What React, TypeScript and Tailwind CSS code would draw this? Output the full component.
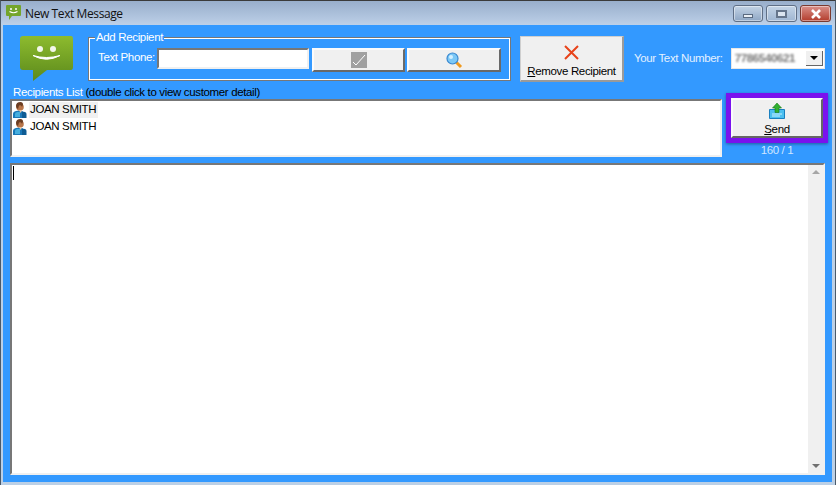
import React from "react";

const font = "font-['Liberation_Sans',sans-serif]";
const txt = "text-[11.5px] tracking-[-0.35px]";

function Person() {
  return (
    <svg width="14" height="16" viewBox="0 0 14 16" className="shrink-0">
      <path d="M0 16V12Q0 9.500 3 9L6 8.500L10 9.500V16Z" fill="#1a78b8" />
      <path d="M2 15V12Q2 10.500 4 10L7 10V15Z" fill="#45aede" />
      <path d="M9 9.500L12 10Q13.500 10.500 13.500 12V16H9Z" fill="#0e5c94" />
      <circle cx="7" cy="5" r="3.800" fill="#b9764a" />
      <path d="M3 4Q3 0 7.500 0Q10 0 10 2.500L9 5Q8.500 2.500 6 3.500L5 7Q3 6 3 4Z" fill="#6b3d22" />
      <path d="M6 8L9 8.500L7.500 11Z" fill="#e8c8a8" />
    </svg>
  );
}

function Recipient({ hl }: { hl?: boolean }) {
  return (
    <div className="flex h-[17px] items-center">
      <Person />
      <span className={`ml-[2px] pl-[1px] pr-[2px] h-[16px] leading-[15px] ${txt} text-black ${hl ? "bg-[#f0f0f0]" : ""}`}>JOAN SMITH</span>
    </div>
  );
}

function WinBtn({ w, cls, children }: { w: string; cls: string; children: React.ReactNode }) {
  return (
    <div className={`${w} ${cls} h-[17px] flex items-center justify-center rounded-[3px] border border-[#5f6f86] shadow-[inset_0_0_0_1px_rgba(255,255,255,0.45)]`}>
      {children}
    </div>
  );
}

const raised = "bg-[#f0f0f0] border-t-2 border-l-2 border-t-[#fbfbfb] border-l-[#fbfbfb] border-r-2 border-b-2 border-r-[#696969] border-b-[#696969]";

export default function App() {
  return (
    <div className={`${font} w-[836px] h-[485px] flex flex-col overflow-hidden bg-[#bcd0e6] border-t border-t-[#3a3a3a] border-x border-x-[#4a5a6a]`}>
      {/* title bar */}
      <div className="h-[24px] shrink-0 flex items-start bg-gradient-to-b from-[#98aecb] to-[#bdd0e8] pl-[5px] pr-[4px]">
        <svg width="15" height="16" viewBox="0 0 15 16" className="mt-[4px] shrink-0">
          <path d="M1 0H14Q15 0 15 1V10Q15 11 14 11H6L3 15V11H1Q0 11 0 10V1Q0 0 1 0Z" fill="#74a52b" />
          <circle cx="5" cy="4" r="1" fill="#fff" />
          <circle cx="10" cy="4" r="1" fill="#fff" />
          <path d="M3.500 6.500Q7.500 9 11.500 6.500" stroke="#fff" strokeWidth="1.200" fill="none" />
        </svg>
        <span className="ml-[4px] mt-[5px] text-[12px] leading-[16px] text-[#111] font-['Open_Sans',sans-serif] tracking-[-0.4px]">New Text Message</span>
        <div className="ml-auto flex gap-[3px] pt-[4px]">
          <WinBtn w="w-[30px]" cls="bg-gradient-to-b from-[#c4d4e6] to-[#8ea6c4]">
            <div className="mt-[4px] w-[10px] h-[4px] bg-[#e8eef5] border border-[#5a6a80]" />
          </WinBtn>
          <WinBtn w="w-[31px]" cls="bg-gradient-to-b from-[#c4d4e6] to-[#9fb6d2]">
            <div className="w-[11px] h-[8px] border-2 border-[#65758b] bg-[#dbe5f0]" />
          </WinBtn>
          <WinBtn w="w-[31px]" cls="bg-gradient-to-b from-[#d9908a] to-[#b23a2a] border-[#7a3a30]">
            <svg width="12" height="10" viewBox="0 0 12 10"><path d="M2 1L10 9M10 1L2 9" stroke="#fff" strokeWidth="2.600" /></svg>
          </WinBtn>
        </div>
      </div>

      {/* body */}
      <div className={`flex-1 ml-[2px] mr-[3px] mb-[3px] min-h-0 bg-[#3399ff] flex flex-col px-[7px] text-white ${txt}`}>
        {/* top row */}
        <div className="h-[62px] shrink-0 flex items-start pt-[11px]">
          <svg width="54" height="46" viewBox="0 0 54 46" className="ml-[10px] shrink-0">
            <defs>
              <linearGradient id="g" x1="0" y1="0" x2="0" y2="1">
                <stop offset="0" stopColor="#8dbb2e" />
                <stop offset="1" stopColor="#5c8a1c" />
              </linearGradient>
            </defs>
            <path d="M3 0H51Q53 0 53 3V31Q53 34 51 34H27L13 45V34H3Q0 34 0 31V3Q0 0 3 0Z" fill="url(#g)" />
            <circle cx="20" cy="13" r="3" fill="#fff" opacity="0.9" />
            <circle cx="33" cy="13" r="3" fill="#fff" opacity="0.9" />
            <path d="M13 19.500Q26.500 27 40 19.500Q26.500 23.500 13 19.500Z" fill="#fff" stroke="#fff" strokeWidth="1" />
          </svg>

          {/* group box */}
          <div className="relative shrink-0 ml-[14px] w-[423px] h-[44px] mt-[1px] border border-[#777] flex items-start pt-[10px] pl-[9px] shadow-[inset_0_0_0_1px_#fff]">
            <span className="absolute left-[6px] top-[-8px] bg-[#3399ff] px-[1px] leading-[15px]">Add Recipient</span>
            <span className="leading-[19px] w-[59px] shrink-0 whitespace-nowrap">Text Phone:</span>
            <div className="shrink-0 w-[152px] h-[21px] bg-white border-2 border-t-[#777] border-l-[#777] border-r-[#f0f0f0] border-b-[#f0f0f0]" />
            <div className={`${raised} shrink-0 ml-[3px] w-[93px] h-[24px] flex items-center justify-center`}>
              <div className="w-[16px] h-[16px] bg-[#a0a0a0] flex items-center justify-center">
                <svg width="14" height="14" viewBox="0 0 14 14"><path d="M1 9L4 12L13 2" stroke="#fff" strokeWidth="1" fill="none" /></svg>
              </div>
            </div>
            <div className={`${raised} shrink-0 ml-[2px] w-[94px] h-[24px] flex items-center justify-center`}>
              <svg width="17" height="17" viewBox="0 0 17 17">
                <path d="M10 10L15 15" stroke="#f09a20" strokeWidth="3" />
                <circle cx="6.500" cy="6.500" r="5.500" fill="#7cc8f6" stroke="#3a88d0" strokeWidth="1.200" />
                <circle cx="5" cy="5" r="2" fill="#d4f0ff" />
              </svg>
            </div>
          </div>

          {/* remove */}
          <div className="shrink-0 ml-[9px] w-[104px] h-[46px] bg-[#f0f0f0] border border-[#cfcfcf] border-b-2 border-r-2 border-r-[#9a9a9a] border-b-[#9a9a9a] flex flex-col items-center pt-[8px]">
            <svg width="15" height="15" viewBox="0 0 15 15"><path d="M1 1L14 14M14 1L1 14" stroke="#e8431a" strokeWidth="2" /></svg>
            <span className="mt-[4px] leading-[15px] text-black whitespace-nowrap"><span className="underline">R</span>emove Recipient</span>
          </div>

          <span className="ml-[10px] mt-[14px] leading-[16px] whitespace-nowrap shrink-0 text-[#e4f1ff]">Your Text Number:</span>
          <div className="grow mt-[12px] ml-[8px] h-[21px] bg-white border border-[#e8e8e8] flex items-center pl-[3px] pr-[1px]">
            <span className="blur-[1.2px] text-[11.5px] font-bold text-[#777] flex-1 whitespace-nowrap overflow-hidden">7786540621</span>
            <div className="shrink-0 w-[17px] h-[15px] bg-[#f0f0f0] border-r border-b border-[#666] flex items-center justify-center">
              <div className="border-x-[4px] border-x-transparent border-t-[4px] border-t-black" />
            </div>
          </div>
        </div>

        {/* recipients row */}
        <div className="flex shrink-0 h-[76px]">
          <div className="w-[712px] shrink-0 flex flex-col">
            <div className="pl-[3px] h-[13px] -mt-[1px] leading-[13px] whitespace-nowrap">
              Recipients List <span className="text-black">(double click to view customer detail)</span>
            </div>
            <div className="h-[58px] bg-white border-2 border-t-[#777] border-l-[#777] border-r-[#f0f0f0] border-b-[#f0f0f0] pl-[1px]">
              <Recipient hl />
              <Recipient />
            </div>
          </div>
          <div className="shrink-0 ml-[4px] mt-[6px] flex flex-col items-center">
            <div className="w-[102px] h-[50px] border-[5px] border-[#7a12ee] shadow-[0_1px_3px_rgba(0,0,0,0.4)]">
              <div className="w-full h-full bg-[#f0f0f0] border-2 border-t-[#fbfbfb] border-l-[#fbfbfb] border-r-[#666] border-b-[#666] flex flex-col items-center pt-[3px]">
                <svg width="16" height="16" viewBox="0 0 16 16" className="shrink-0">
                  <path d="M0.500 6.500H15.500V15.500H0.500Z" fill="#4cc0f0" stroke="#1a80c0" />
                  <path d="M3 11H13M3 13H11" stroke="#c8f0ff" />
                  <path d="M8 0L12.500 5H10V9.500H6V5H3.500Z" fill="#30b030" stroke="#1a7a1a" strokeWidth="0.600" />
                </svg>
                <span className="mt-[3px] leading-[15px] text-black"><span className="underline">S</span>end</span>
              </div>
            </div>
            <span className="leading-[14px] text-[#cfe6ff] whitespace-nowrap">160 / 1</span>
          </div>
        </div>

        {/* message */}
        <div className="flex-1 min-h-0 mb-[7px] flex bg-white border-t-2 border-l-2 border-t-[#777] border-l-[#777] border-b-2 border-b-[#f0f0f0] border-r-2 border-r-[#f0f0f0]">
          <div className="flex-1 pl-[1px] pt-[1px]"><div className="w-[1px] h-[14px] bg-black" /></div>
          <div className="w-[15px] bg-[#f0f0f0] flex flex-col justify-between items-center py-[5px]">
            <div className="border-x-[4px] border-x-transparent border-b-[4px] border-b-[#a6a6a6]" />
            <div className="border-x-[4px] border-x-transparent border-t-[4px] border-t-[#707070]" />
          </div>
        </div>
      </div>
    </div>
  );
}
